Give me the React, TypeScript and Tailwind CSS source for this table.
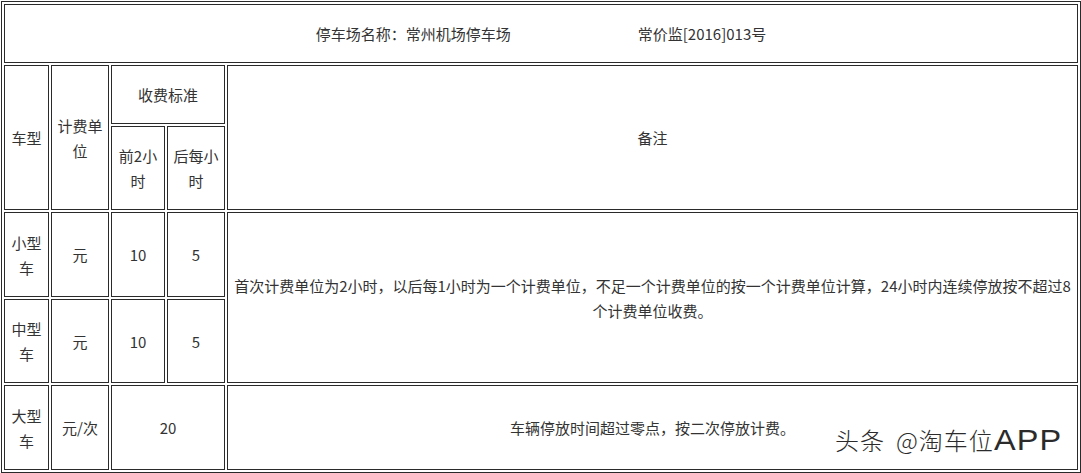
import React from 'react';

const cell =
  'border border-[#2a2a2a] bg-white flex items-center justify-center text-center';

function Cell({ className = '', children }: { className?: string; children?: React.ReactNode }) {
  return <div className={`${cell} ${className}`}>{children}</div>;
}

export default function App() {
  return (
    <div className="relative w-[1081px] h-[473px] bg-white overflow-hidden font-['Noto_Sans_CJK_SC',sans-serif] text-[15px] leading-[25px] text-[#333]">
      <div className="ml-px mt-px w-[1080px] border border-[#2a2a2a] p-[2px]">
        <div className="grid grid-cols-[45px_58px_54px_58px_851px] grid-rows-[59px_59px_84px_85px_84px_85px] gap-[2px]">
          <Cell className="col-span-5">
            <span>停车场名称：常州机场停车场</span>
            <span className="inline-block w-[127px]" />
            <span>常价监[2016]013号</span>
          </Cell>

          <Cell className="row-span-2">车型</Cell>
          <Cell className="row-span-2">
            计费单<br />位
          </Cell>
          <Cell className="col-span-2">收费标准</Cell>
          <Cell className="row-span-2">备注</Cell>
          <Cell>
            前2小<br />时
          </Cell>
          <Cell>
            后每小<br />时
          </Cell>

          <Cell>
            小型<br />车
          </Cell>
          <Cell>元</Cell>
          <Cell>10</Cell>
          <Cell>5</Cell>
          <Cell className="row-span-2 flex-col">
            <span className="block whitespace-nowrap">
              首次计费单位为2小时，以后每1小时为一个计费单位，不足一个计费单位的按一个计费单位计算，24小时内连续停放按不超过8
            </span>
            <span className="block whitespace-nowrap">个计费单位收费。</span>
          </Cell>

          <Cell>
            中型<br />车
          </Cell>
          <Cell>元</Cell>
          <Cell>10</Cell>
          <Cell>5</Cell>

          <Cell>
            大型<br />车
          </Cell>
          <Cell>元/次</Cell>
          <Cell className="col-span-2">20</Cell>
          <Cell>车辆停放时间超过零点，按二次停放计费。</Cell>
        </div>
      </div>

      <div className="absolute left-[835px] top-[425px] flex items-center text-[24px] leading-[30px] font-light text-[#2b2b2b] [text-shadow:1px_0_0_#fff,0_-1px_0_#fff]">
        <span className="tracking-[1px]">头条</span>
        <span className="ml-[11px] tracking-[1px]">@淘车位</span>
        <span className="inline-block origin-left scale-x-[1.12] font-['Liberation_Sans',sans-serif] text-[29px] tracking-[1px]">
          APP
        </span>
      </div>
    </div>
  );
}
